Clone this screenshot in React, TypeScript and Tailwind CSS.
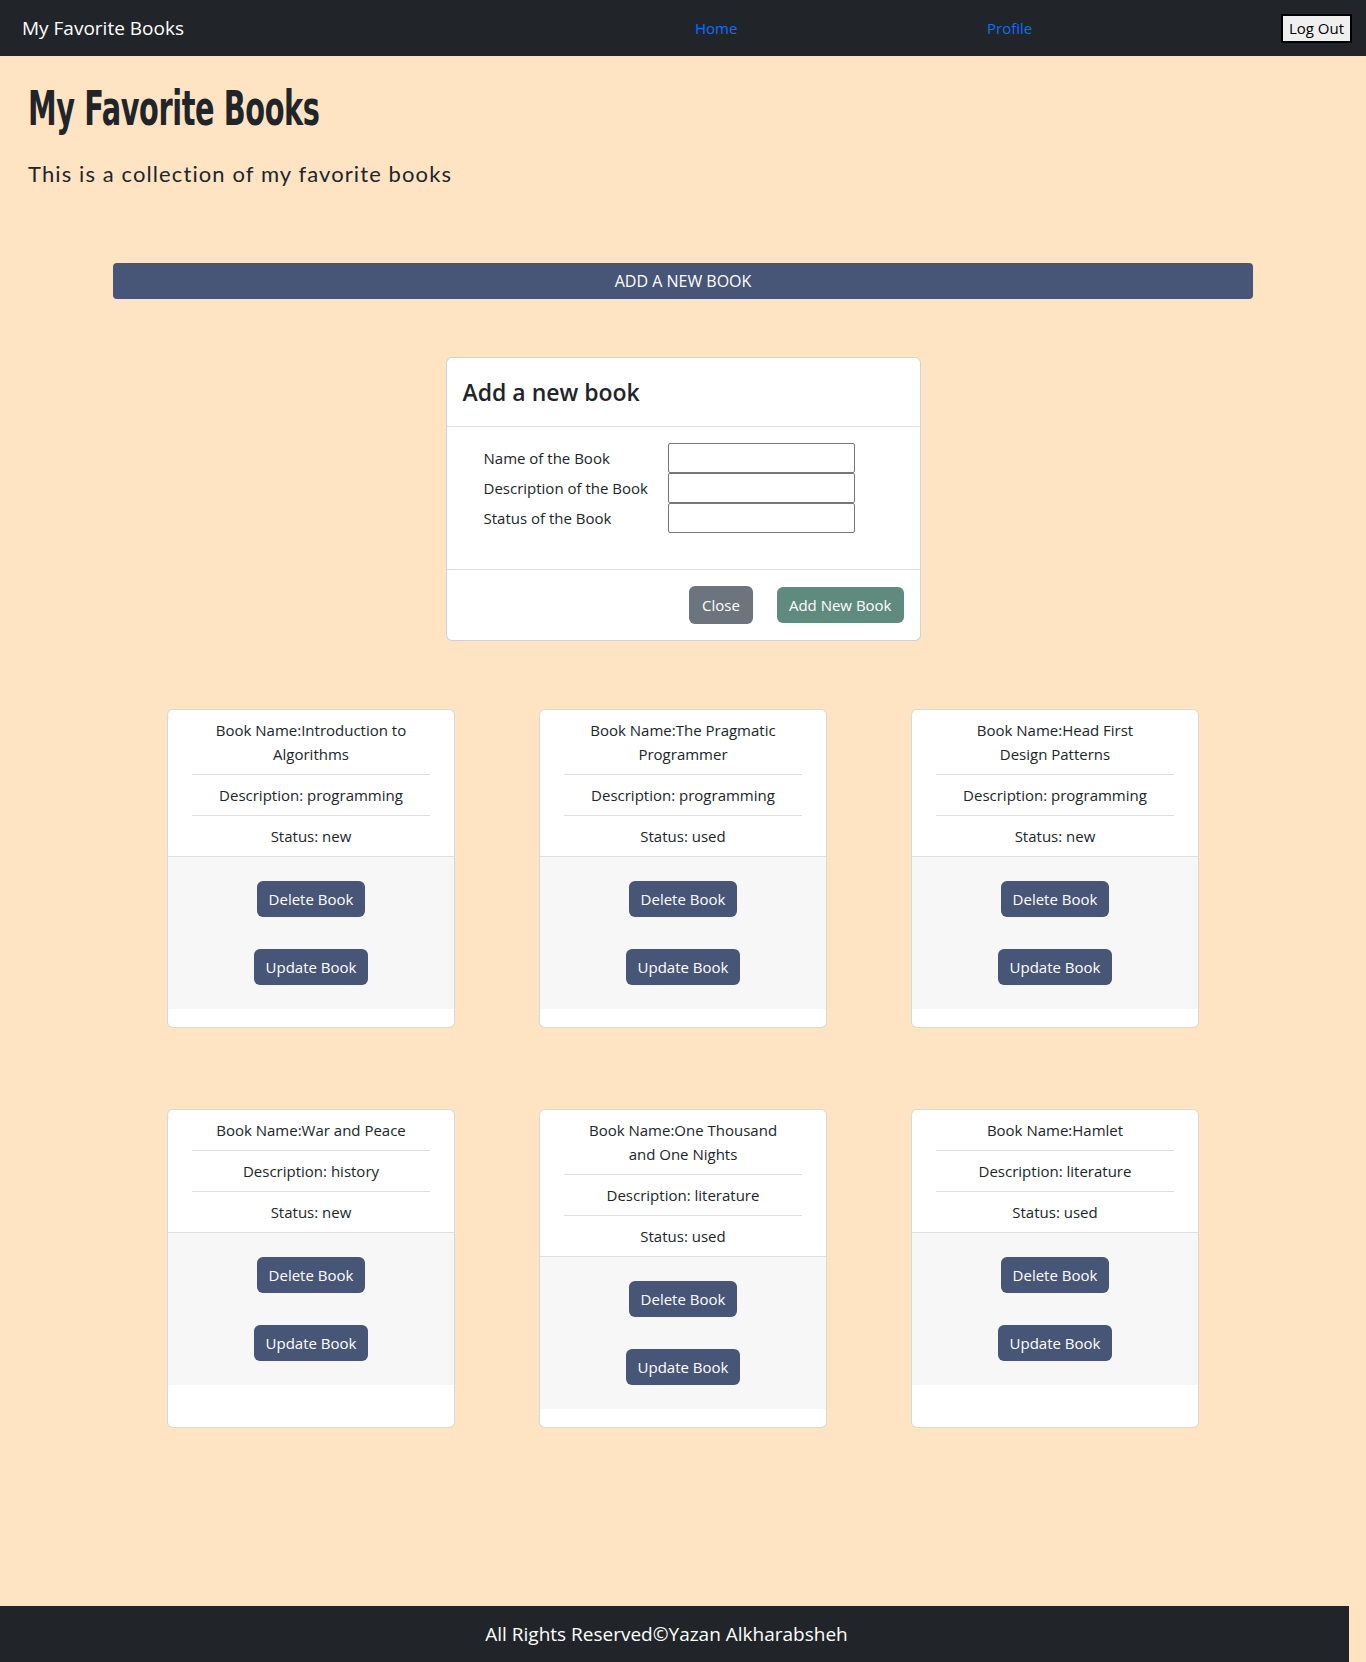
import React from "react";

type Book = { lines: string[]; desc: string; status: string };

const books: Book[] = [
  { lines: ["Book Name:Introduction to", "Algorithms"], desc: "programming", status: "new" },
  { lines: ["Book Name:The Pragmatic", "Programmer"], desc: "programming", status: "used" },
  { lines: ["Book Name:Head First", "Design Patterns"], desc: "programming", status: "new" },
  { lines: ["Book Name:War and Peace"], desc: "history", status: "new" },
  { lines: ["Book Name:One Thousand", "and One Nights"], desc: "literature", status: "used" },
  { lines: ["Book Name:Hamlet"], desc: "literature", status: "used" },
];

function BookCard({ book }: { book: Book }) {
  return (
    <div className="w-[288px] mx-auto h-full bg-white border border-black/[0.15] rounded-[6px] flex flex-col overflow-hidden">
      <ul className="mx-6 text-center text-[15px] leading-6 text-[#212529]">
        <li className="px-4 py-2 border-b border-[#dfdfdf]">
          {book.lines.map((l, i) => (
            <span key={i} className="block">
              {l}
            </span>
          ))}
        </li>
        <li className="px-4 py-2 border-b border-[#dfdfdf]">Description: {book.desc}</li>
        <li className="px-4 py-2">Status: {book.status}</li>
      </ul>
      <div className="border-t border-[#dfdfdf] bg-[#f7f7f7] flex flex-col items-center pt-6 pb-6 gap-8">
        <button className="h-9 px-3 rounded-[6px] bg-[#475577] text-white text-[15px] leading-6">
          Delete Book
        </button>
        <button className="h-9 px-3 rounded-[6px] bg-[#475577] text-white text-[15px] leading-6">
          Update Book
        </button>
      </div>
      <div className="h-[18px]" />
    </div>
  );
}

export default function App() {
  return (
    <div className="min-h-[1662px] flex flex-col bg-[#ffe4c4] font-['Open_Sans',sans-serif] text-[#212529]">
      <nav className="h-14 bg-[#212529] flex items-center">
        <div className="w-[695px] pl-[22px] text-white text-[19px] leading-[30px]">My Favorite Books</div>
        <a className="w-[292px] text-[#0d6efd] text-[15px]">Home</a>
        <a className="flex-1 text-[#0d6efd] text-[15px]">Profile</a>
        <button className="mr-[14px] h-[29px] px-[6px] bg-[#efefef] border-2 border-black text-black text-[15px] leading-5">
          Log Out
        </button>
      </nav>

      <main className="flex-1 flex flex-col">
        <div className="pl-[28px]">
          <h1 className="mt-[33px] h-[48px] text-[40px] leading-[48px] font-bold tracking-[-0.5px] font-['DejaVu_Sans_Condensed','DejaVu_Sans',sans-serif] scale-x-[0.8] scale-y-[1.22] origin-bottom-left whitespace-nowrap">
            My Favorite Books
          </h1>
          <p className="mt-[21px] text-[22px] leading-[32px] tracking-[1.1px] font-['Lato',sans-serif]">
            This is a collection of my favorite books
          </p>
        </div>

        <button className="mt-[73px] mx-auto w-[1140px] h-9 rounded-[4px] bg-[#475577] text-white text-[16px] uppercase">
          Add a new book
        </button>

        <div className="mt-[58px] mx-auto w-[475px] bg-white border border-black/[0.175] rounded-[6px]">
          <div className="h-[69px] px-4 flex items-center border-b border-[#dee2e6]">
            <h5 className="text-[23px] leading-9 font-semibold">Add a new book</h5>
          </div>
          <div className="pt-4 pb-9 pl-[37px]">
            <div className="grid grid-cols-[184px_187px] text-[15px] items-center">
              <label className="h-[30px] flex items-center">Name of the Book</label>
              <input className="h-[30px] border border-[#767676] rounded-[2px] bg-white" />
              <label className="h-[30px] flex items-center">Description of the Book</label>
              <input className="h-[30px] border border-[#767676] rounded-[2px] bg-white" />
              <label className="h-[30px] flex items-center">Status of the Book</label>
              <input className="h-[30px] border border-[#767676] rounded-[2px] bg-white" />
            </div>
          </div>
          <div className="border-t border-[#dee2e6] h-[71px] flex items-center justify-end pr-4 gap-6">
            <button className="h-[38px] px-[13px] rounded-[6px] bg-[#6c757d] text-white text-[15px]">Close</button>
            <button className="h-9 px-3 rounded-[6px] bg-[#5e8b7e] text-white text-[15px]">Add New Book</button>
          </div>
        </div>

        <div className="mt-[68px] mx-auto w-[1116px] grid grid-cols-3 gap-y-[81px]">
          {books.map((b, i) => (
            <BookCard key={i} book={b} />
          ))}
        </div>
      </main>

      <footer className="w-[1349px] h-14 pr-4 bg-[#212529] flex items-center justify-center text-white text-[19px]">
        All Rights Reserved©Yazan Alkharabsheh
      </footer>
    </div>
  );
}
